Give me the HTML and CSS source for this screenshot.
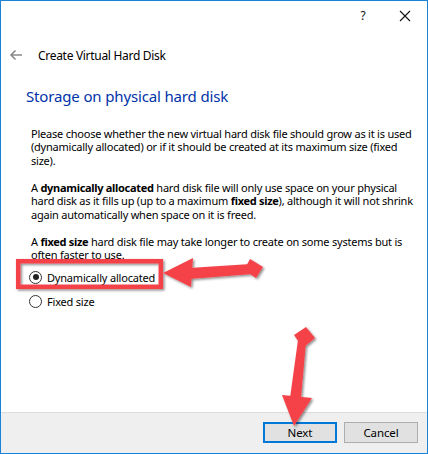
FILE: index.html
```html
<!DOCTYPE html>
<html>
<head>
<meta charset="utf-8">
<link rel="stylesheet" href="styles.css">
</head>
<body>
<div class="window">
  <div class="titlebar">
    <span class="ctl help">?</span>
    <span class="ctl close"><svg width="12" height="12" viewBox="0 0 12 12"><path d="M1 1 L11 11 M11 1 L1 11" stroke="#111" stroke-width="1.1" fill="none"/></svg></span>
  </div>
  <div class="nav">
    <svg class="back" width="14" height="12" viewBox="0 0 14 12"><path d="M13 6 H2 M6.5 1.5 L2 6 L6.5 10.5" stroke="#8a8a8a" stroke-width="1.6" fill="none"/></svg>
    <span class="nav-title">Create Virtual Hard Disk</span>
  </div>
  <div class="content">
    <h1 class="heading">Storage on physical hard disk</h1>
    <div class="desc">
      <p>Please choose whether the new virtual hard disk file should grow as it is used<br>(dynamically allocated) or if it should be created at its maximum size (fixed<br>size).</p>
      <p>A <b>dynamically allocated</b> hard disk file will only use space on your physical<br>hard disk as it fills up (up to a maximum <b>fixed size</b>), although it will not shrink<br>again automatically when space on it is freed.</p>
      <p>A <b>fixed size</b> hard disk file may take longer to create on some systems but is<br>often faster to use.</p>
    </div>
    <div class="options">
      <div class="radio checked"><span class="circle"></span><span>Dynamically allocated</span></div>
      <div class="radio"><span class="circle"></span><span>Fixed size</span></div>
    </div>
  </div>
  <div class="footer">
    <button class="btn primary">Next</button>
    <button class="btn">Cancel</button>
  </div>
  <svg class="annot" width="428" height="454" viewBox="0 0 428 454">
    <defs>
      <filter id="sh" x="-20%" y="-20%" width="140%" height="140%">
        <feDropShadow dx="1.5" dy="1.5" stdDeviation="1.3" flood-color="#000" flood-opacity="0.45"/>
      </filter>
    </defs>
    <g filter="url(#sh)" fill="#f5434a">
      <rect x="18.2" y="261.2" width="142.6" height="25.6" fill="none" stroke="#f5434a" stroke-width="4.5"/>
      <polygon points="163,273 193,258 191,287"/>
      <polygon points="189,268 251,264 253,274 189,279"/>
      <polygon points="250,259 263,267 256,278 244,270"/>
      <polygon points="306,327 315,338 303,348 294,335"/>
      <polygon points="298,340 306,342 301,398 290,398"/>
      <polygon points="282,395 312,398 294,426"/>
    </g>
  </svg>
</div>
</body>
</html>
```
FILE: styles.css
```css
html, body {
  margin: 0;
  padding: 0;
  background: #fff;
}
body {
  font-family: "Noto Sans", "Open Sans", sans-serif;
  color: #000;
}
.window {
  position: relative;
  width: 428px;
  height: 454px;
  box-sizing: border-box;
  border: 1px solid #1883d7;
  display: flex;
  flex-direction: column;
  background: #fff;
  overflow: hidden;
}
.titlebar {
  height: 29px;
  display: flex;
  justify-content: flex-end;
  align-items: center;
}
.ctl {
  width: 46px;
  height: 29px;
  display: flex;
  align-items: center;
  justify-content: center;
}
.help {
  font-size: 12px;
  color: #111;
  padding-left: 6px;
  box-sizing: border-box;
}
.close {
  width: 44px;
}
.nav {
  height: 48px;
  display: flex;
  align-items: center;
  padding-left: 8px;
  margin-top: 1px;
}
.back {
  display: block;
  margin-right: 15px;
}
.nav-title {
  font-size: 12px;
  letter-spacing: -0.3px;
}
.content {
  flex: 1;
  padding-left: 25px;
}
.heading {
  margin: 4px 0 0 0;
  font-weight: normal;
  font-size: 15px;
  letter-spacing: -0.15px;
  color: #0033a8;
  height: 26px;
  line-height: 26px;
}
.desc {
  padding-left: 5px;
  padding-top: 18px;
  font-size: 11px;
  letter-spacing: -0.22px;
  line-height: 13.4px;
}
.desc p {
  margin: 0 0 13.6px 0;
  white-space: nowrap;
}
.desc b {
  font-weight: bold;
  letter-spacing: -0.3px;
}
.options {
  padding-left: 3px;
  margin-top: -10px;
}
.radio {
  height: 24px;
  display: flex;
  align-items: center;
  font-size: 11px;
  letter-spacing: -0.2px;
}
.circle {
  width: 11px;
  height: 11px;
  border: 1px solid #333;
  border-radius: 50%;
  margin-right: 5px;
  position: relative;
  background: #fff;
}
.checked .circle::after {
  content: "";
  position: absolute;
  left: 2.5px;
  top: 2.5px;
  width: 6px;
  height: 6px;
  border-radius: 50%;
  background: #222;
}
.footer {
  height: 41px;
  box-sizing: border-box;
  border-top: 1px solid #dcdcdc;
  background: #efefef;
  display: flex;
  justify-content: flex-end;
  align-items: flex-start;
  padding: 9px 9px 0 0;
  gap: 7px;
}
.btn {
  width: 74px;
  height: 21px;
  box-sizing: border-box;
  background: #e1e1e1;
  border: 1px solid #adadad;
  font-family: "Noto Sans", "Open Sans", sans-serif;
  font-size: 11.5px;
  letter-spacing: -0.1px;
  color: #000;
  padding: 0;
  margin: 0;
}
.btn.primary {
  border: 2px solid #0078d7;
}
.annot {
  position: absolute;
  left: -1px;
  top: -1px;
  pointer-events: none;
}
```
